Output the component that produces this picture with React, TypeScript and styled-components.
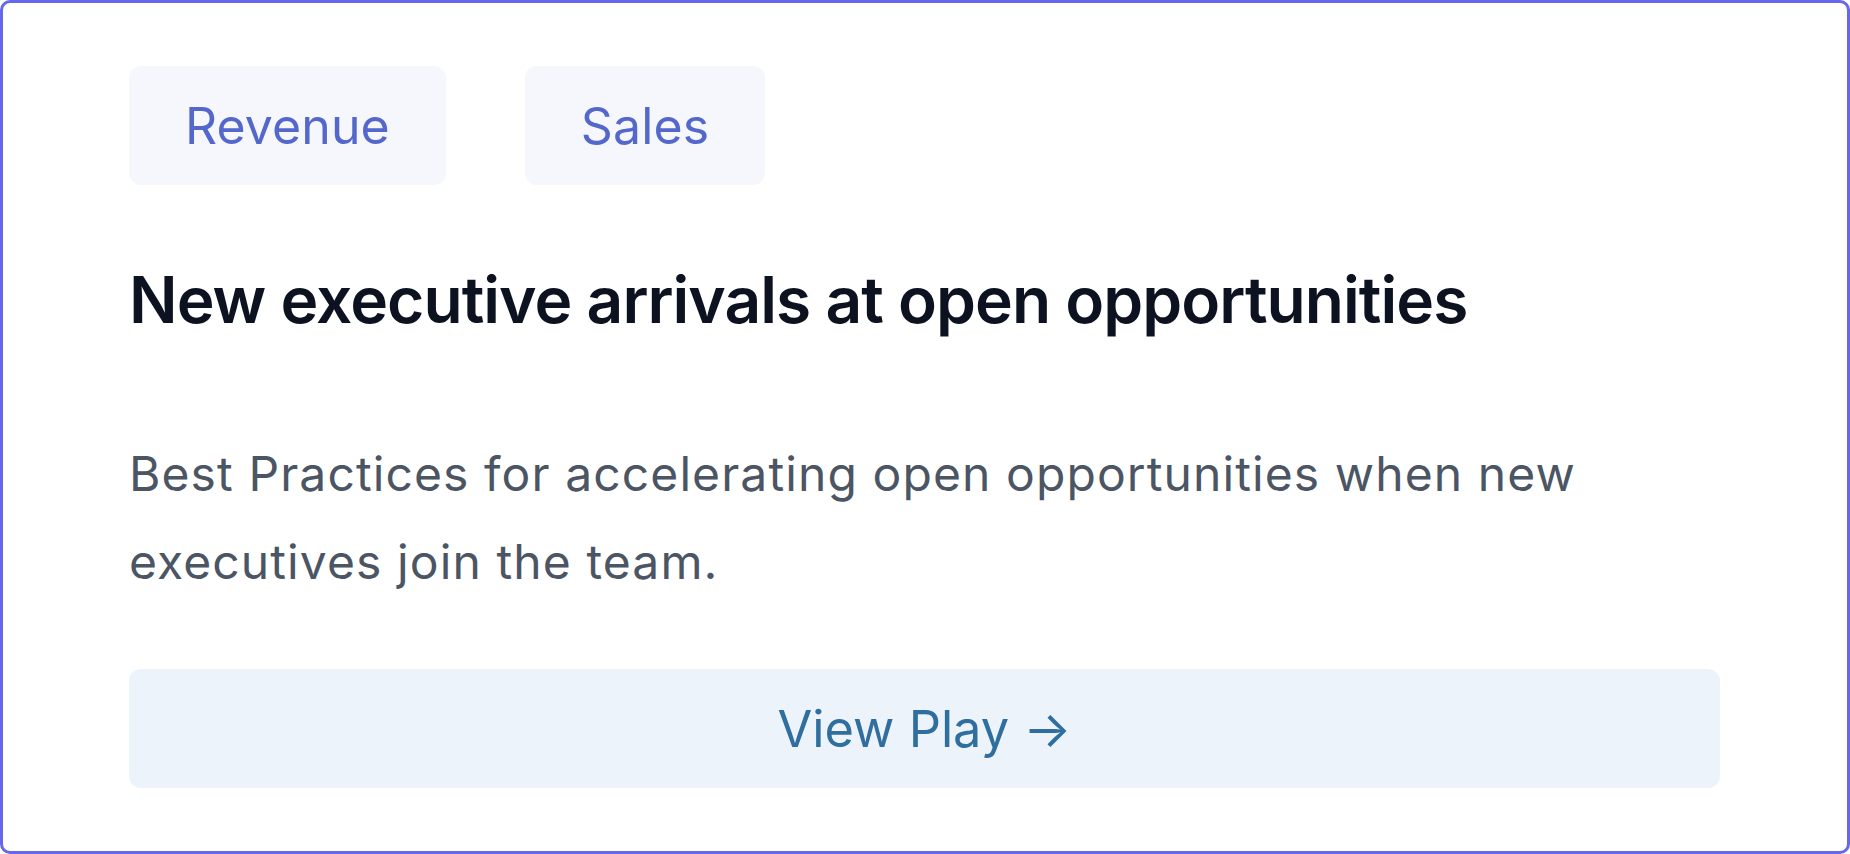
import styled, { createGlobalStyle } from 'styled-components';

const GlobalStyle = createGlobalStyle`
  * {
    box-sizing: border-box;
  }
  body {
    margin: 0;
    font-family: Inter, 'Noto Sans', 'Liberation Sans', sans-serif;
    background: #ffffff;
  }
`;

const tags = ['Revenue', 'Sales'];

const App = () => {
  return (
    <>
      <GlobalStyle />
      <Card>
        <Tags>
          {tags.map((tag) => (
            <Tag key={tag}>{tag}</Tag>
          ))}
        </Tags>
        <Title>New executive arrivals at open opportunities</Title>
        <Description>
          Best Practices for accelerating open opportunities when new executives
          join the team.
        </Description>
        <ViewButton type="button">View Play →</ViewButton>
      </Card>
    </>
  );
};

const Card = styled.div`
  width: 100%;
  height: 100vh;
  border: 3px solid #6568ea;
  border-radius: 10px;
  padding: 63px 127px 63px 126px;
  display: flex;
  flex-direction: column;
  background: #ffffff;
`;

const Tags = styled.div`
  display: flex;
  gap: 79px;
`;

const Tag = styled.span`
  display: inline-flex;
  align-items: center;
  justify-content: center;
  height: 119px;
  padding: 0 56px;
  border-radius: 12px;
  background: #f6f7fd;
  color: #5468cb;
  font-size: 50px;
  font-weight: 400;
  letter-spacing: 0.1px;
`;

const Title = styled.h1`
  margin: 75px 0 0;
  font-size: 64px;
  line-height: 80px;
  font-weight: 600;
  letter-spacing: -0.95px;
  color: #0d1220;
`;

const Description = styled.p`
  margin: 90px 0 0;
  font-size: 48px;
  line-height: 88px;
  letter-spacing: 1.1px;
  color: #4b5563;
`;

const ViewButton = styled.button`
  margin-top: 63px;
  height: 120px;
  width: 100%;
  border: none;
  border-radius: 12px;
  background: #ecf3fa;
  color: #2f6e9e;
  font-family: inherit;
  font-size: 50.5px;
  font-weight: 400;
  cursor: pointer;
`;

export default App;
